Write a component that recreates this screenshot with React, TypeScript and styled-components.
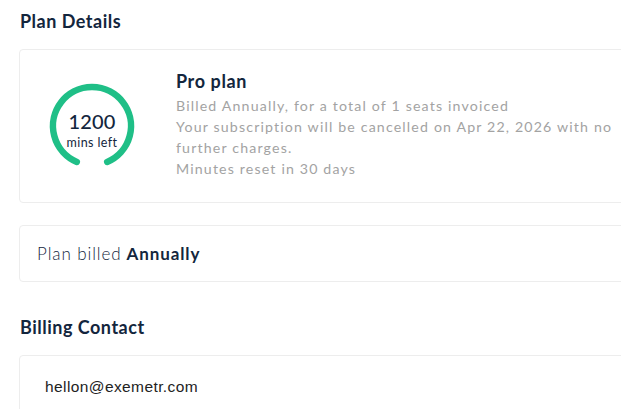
import React from "react";
import styled, { createGlobalStyle } from "styled-components";

const Global = createGlobalStyle`
  html, body { margin: 0; padding: 0; background: #ffffff; overflow: hidden; }
  body { font-family: Lato, "Open Sans", sans-serif; }
`;

const Page = styled.div`
  width: 720px;
  padding: 8px 0 0 19px;
  display: flex;
  flex-direction: column;
`;

const SectionTitle = styled.h2<{ $top?: number }>`
  margin: ${(p) => p.$top ?? 0}px 0 15px 1px;
  font-size: 18px;
  line-height: 26px;
  font-weight: 700;
  color: #13263d;
  letter-spacing: 0.5px;
`;

const Card = styled.div<{ $h: number; $pad: number }>`
  box-sizing: border-box;
  height: ${(p) => p.$h}px;
  border: 1px solid #ededed;
  border-radius: 4px;
  display: flex;
  align-items: center;
  padding-left: ${(p) => p.$pad}px;
  background: #fff;
`;

const PlanCard = styled(Card)`
  gap: 39px;
  margin-bottom: 22px;
`;

const Gauge = styled.div`
  position: relative;
  width: 90px;
  height: 90px;
  flex: none;
`;

const GaugeLabel = styled.div`
  position: absolute;
  inset: 0;
  display: flex;
  flex-direction: column;
  align-items: center;
  justify-content: center;
  padding-top: 8px;
  box-sizing: border-box;
`;

const Big = styled.div`
  font-size: 20px;
  line-height: 22px;
  color: #13263d;
  font-weight: 500;
  letter-spacing: 0.2px;
`;

const Small = styled.div`
  font-size: 12.5px;
  line-height: 15px;
  margin-top: 3px;
  color: #13263d;
  letter-spacing: 0.4px;
`;

const PlanInfo = styled.div`
  display: flex;
  flex-direction: column;
  padding-bottom: 3px;
`;

const PlanName = styled.div`
  font-size: 18px;
  line-height: 22px;
  font-weight: 700;
  color: #13263d;
  letter-spacing: 0.6px;
  margin-bottom: 3px;
`;

const Muted = styled.div`
  font-size: 14.2px;
  line-height: 21px;
  color: #a3a3a3;
  letter-spacing: 1.15px;
  width: 445px;
`;

const BilledCard = styled(Card)`
  font-size: 17px;
  color: #13263d;
  font-weight: 300;
  letter-spacing: 0.9px;
`;

const Strong = styled.b`
  font-weight: 700;
  margin-left: 5px;
`;

const ContactCard = styled(Card)`
  align-items: flex-start;
  padding-top: 22px;
  font-family: "Liberation Sans", Arial, sans-serif;
  font-size: 15.5px;
  color: #222;
  letter-spacing: 0.4px;
`;

export default function App() {
  return (
    <>
      <Global />
      <Page>
        <SectionTitle>Plan Details</SectionTitle>
        <PlanCard $h={154} $pad={27}>
          <Gauge>
            <svg width="90" height="90" viewBox="0 0 90 90">
              <path
                d="M 29.8 80.9 A 39 39 0 1 1 60.2 80.9"
                fill="none"
                stroke="#1fbf87"
                strokeWidth="6.5"
                strokeLinecap="round"
              />
            </svg>
            <GaugeLabel>
              <Big>1200</Big>
              <Small>mins left</Small>
            </GaugeLabel>
          </Gauge>
          <PlanInfo>
            <PlanName>Pro plan</PlanName>
            <Muted>Billed Annually, for a total of 1 seats invoiced</Muted>
            <Muted>
              Your subscription will be cancelled on Apr 22, 2026 with no further charges.
            </Muted>
            <Muted>Minutes reset in 30 days</Muted>
          </PlanInfo>
        </PlanCard>
        <BilledCard $h={57} $pad={17}>
          Plan billed<Strong>Annually</Strong>
        </BilledCard>
        <SectionTitle $top={32}>Billing Contact</SectionTitle>
        <ContactCard $h={80} $pad={25}>
          hellon@exemetr.com
        </ContactCard>
      </Page>
    </>
  );
}
